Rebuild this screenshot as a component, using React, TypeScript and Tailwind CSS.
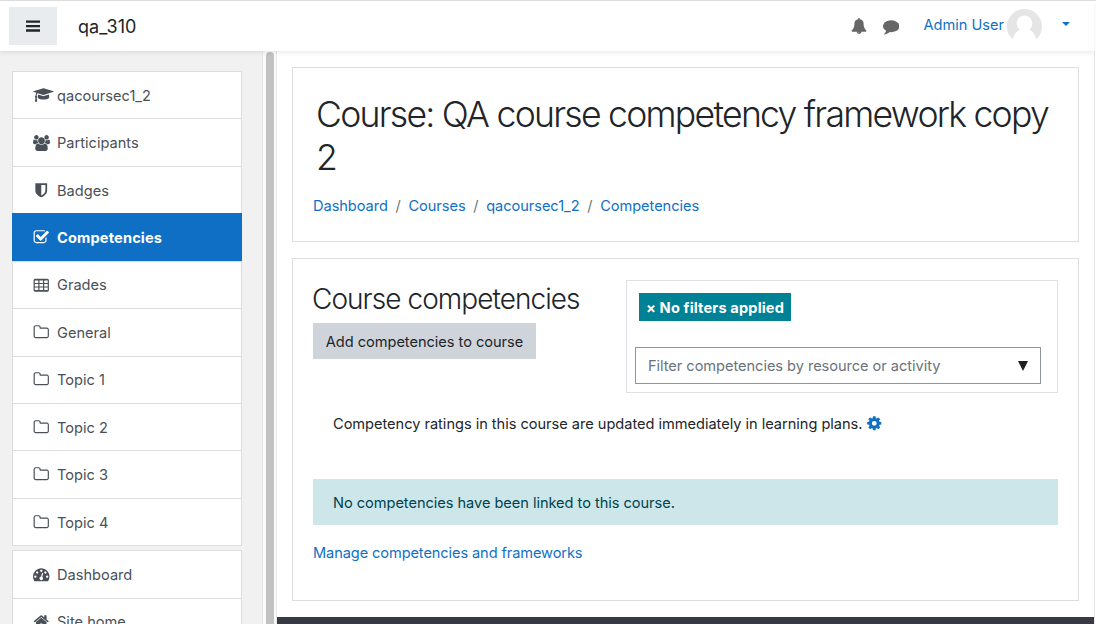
import type { ReactNode } from 'react';
import clsx from 'clsx';

const ICONS = {
    cap: 'M1774 836l18 316q4 69-82 128t-235 93.5-323 34.5-323-34.5-235-93.5-82-128l18-316 574 181q22 7 48 7t48-7zm530-324q0 23-22 31l-1120 352q-4 1-10 1t-10-1l-652-206q-43 34-71 111.5t-34 178.5q63 36 63 109 0 69-58 107l58 433q2 14-8 25-9 11-24 11h-192q-15 0-24-11-10-11-8-25l58-433q-58-38-58-107 0-73 65-111 11-207 98-330l-333-104q-22-8-22-31t22-31l1120-352q4-1 10-1t10 1l1120 352q22 8 22 31z',
    users: 'M529 896q-162 5-265 128h-134q-82 0-138-40.5t-56-118.5q0-353 124-353 6 0 43.5 21t97.5 42.5 119 21.5q67 0 133-23-5 37-5 66 0 139 81 256zm1071 637q0 120-73 189.5t-194 69.5h-874q-121 0-194-69.5t-73-189.5q0-53 3.5-103.5t14-109 26.5-108.5 43-97.5 62-81 85.5-53.5 111.5-20q10 0 43 21.5t73 48 107 48 135 21.5 135-21.5 107-48 73-48 43-21.5q61 0 111.5 20t85.5 53.5 62 81 43 97.5 26.5 108.5 14 109 3.5 103.5zm-1024-1277q0 106-75 181t-181 75-181-75-75-181 75-181 181-75 181 75 75 181zm704 384q0 159-112.5 271.5t-271.5 112.5-271.5-112.5-112.5-271.5 112.5-271.5 271.5-112.5 271.5 112.5 112.5 271.5zm576 225q0 78-56 118.5t-138 40.5h-134q-103-123-265-128 81-117 81-256 0-29-5-66 66 23 133 23 59 0 119-21.5t97.5-42.5 43.5-21q124 0 124 353zm-128-609q0 106-75 181t-181 75-181-75-75-181 75-181 181-75 181 75 75 181z',
    shield: 'M1344 960v-640h-448v1137q119-63 213-137 235-184 235-360zm192-768v768q0 86-33.5 170.5t-83 150-118 127.5-126.5 103-121 77.5-89.5 49.5-42.5 20q-12 6-26 6t-26-6q-16-7-42.5-20t-89.5-49.5-121-77.5-126.5-103-118-127.5-83-150-33.5-170.5v-768q0-26 19-45t45-19h1152q26 0 45 19t19 45z',
    check: 'M1472 930v318q0 119-84.5 203.5t-203.5 84.5h-832q-119 0-203.5-84.5t-84.5-203.5v-832q0-119 84.5-203.5t203.5-84.5h832q63 0 117 25 15 7 18 23 3 17-9 29l-49 49q-10 10-23 10-3 0-9-2-23-6-45-6h-832q-66 0-113 47t-47 113v832q0 66 47 113t113 47h832q66 0 113-47t47-113v-254q0-13 9-22l64-64q10-10 23-10 6 0 12 3 20 8 20 29zm231-489l-814 814q-24 24-57 24t-57-24l-430-430q-24-24-24-57t24-57l110-110q24-24 57-24t57 24l263 263 647-647q24-24 57-24t57 24l110 110q24 24 24 57t-24 57z',
    table: 'M1728 352v1088q0 66-47 113t-113 47h-1344q-66 0-113-47t-47-113v-1088q0-66 47-113t113-47h1344q66 0 113 47t47 113zM192 384v256h384v-256zM704 384v256h384v-256zM1216 384v256h384v-256zM192 768v256h384v-256zM704 768v256h384v-256zM1216 768v256h384v-256zM192 1152v256h384v-256zM704 1152v256h384v-256zM1216 1152v256h384v-256z',
    folder: 'M1600 1312v-704q0-40-28-68t-68-28h-704q-40 0-68-28t-28-68v-64q0-40-28-68t-68-28h-320q-40 0-68 28t-28 68v960q0 40 28 68t68 28h1216q40 0 68-28t28-68zm128-704v704q0 92-66 158t-158 66h-1216q-92 0-158-66t-66-158v-960q0-92 66-158t158-66h320q92 0 158 66t66 158v32h672q92 0 158 66t66 158z',
    gauge: 'M384 1152q0-53-37.5-90.5t-90.5-37.5-90.5 37.5-37.5 90.5 37.5 90.5 90.5 37.5 90.5-37.5 37.5-90.5zm192-448q0-53-37.5-90.5t-90.5-37.5-90.5 37.5-37.5 90.5 37.5 90.5 90.5 37.5 90.5-37.5 37.5-90.5zm428 481l101-382q6-26-7.5-48.5t-38.5-29.5-48 6.5-30 39.5l-101 382q-60 5-107 43.5t-63 98.5q-20 77 20 146t117 89 146-20 89-117q16-60-6-117t-72-91zm660-33q0-53-37.5-90.5t-90.5-37.5-90.5 37.5-37.5 90.5 37.5 90.5 90.5 37.5 90.5-37.5 37.5-90.5zm-640-640q0-53-37.5-90.5t-90.5-37.5-90.5 37.5-37.5 90.5 37.5 90.5 90.5 37.5 90.5-37.5 37.5-90.5zm448 192q0-53-37.5-90.5t-90.5-37.5-90.5 37.5-37.5 90.5 37.5 90.5 90.5 37.5 90.5-37.5 37.5-90.5zm320 448q0 261-141 483-19 29-54 29h-1402q-35 0-54-29-141-221-141-483 0-182 71-348t191-286 286-191 348-71 348 71 286 191 191 286 71 348z',
    home: 'M1472 992v480q0 26-19 45t-45 19h-384v-384h-256v384h-384q-26 0-45-19t-19-45v-480q0-1 .5-3t.5-3l575-474 575 474q1 2 1 6zm223-69l-62 74q-8 9-21 11h-3q-13 0-21-7l-692-577-692 577q-12 8-24 7-13-2-21-11l-62-74q-8-10-7-23.5t11-21.5l719-599q32-26 76-26t76 26l244 204v-195q0-14 9-23t23-9h192q14 0 23 9t9 23v408l219 182q10 8 11 21.5t-7 23.5z',
    cog: 'M1152 896q0-106-75-181t-181-75-181 75-75 181 75 181 181 75 181-75 75-181zm512-109v222q0 12-8 23t-20 13l-185 28q-19 54-39 91 35 50 107 138 10 12 10 25t-9 23q-27 37-99 108t-94 71q-12 0-26-9l-138-108q-44 23-91 38-16 136-29 186-7 28-36 28h-222q-14 0-24.5-8.5t-11.5-21.5l-28-184q-49-16-90-37l-141 107q-10 9-25 9-14 0-25-11-126-114-165-168-7-10-7-23 0-12 8-23 15-21 51-66.5t54-70.5q-27-50-41-99l-183-27q-13-2-21-12.5t-8-23.5v-222q0-12 8-23t19-13l186-28q14-46 39-92-40-57-107-138-10-12-10-24 0-10 9-23 26-36 98.5-107.5t94.5-71.5q13 0 26 10l138 107q44-23 91-38 16-136 29-186 7-28 36-28h222q14 0 24.5 8.5t11.5 21.5l28 184q49 16 90 37l142-107q9-9 24-9 13 0 25 10 129 119 165 170 7 8 7 22 0 12-8 23-15 21-51 66.5t-54 70.5q26 50 41 98l183 28q13 2 21 12.5t8 23.5z',
    bell: 'M912 1696q0-16-16-16-59 0-101.5-42.5t-42.5-101.5q0-16-16-16t-16 16q0 73 51.5 124.5t124.5 51.5q16 0 16-16zm816-288q0 52-38 90t-90 38h-448q0 106-75 181t-181 75-181-75-75-181h-448q-52 0-90-38t-38-90q50-42 91-88t85-119.5 74.5-158.5 50-206 19.5-260q0-152 117-282.5t307-158.5q-8-19-8-39 0-40 28-68t68-28 68 28 28 68q0 20-8 39 190 28 307 158.5t117 282.5q0 139 19.5 260t50 206 74.5 158.5 85 119.5 91 88z',
    comment: 'M1792 896q0 174-120 321.5t-326 233-450 85.5q-70 0-145-8-198 175-460 242-49 14-114 22-17 2-30.5-9t-17.5-29v-1q-3-4-.5-12t2-10 4.5-9.5l6-9 7-8.5 8-9q7-8 31-34.5t34.5-38 31-39.5 32.5-51 27-59 26-76q-157-89-247.5-220t-90.5-281q0-130 71-248.5t191-204.5 286-136.5 348-50.5q244 0 450 85.5t326 233 120 321.5z',
};

type IconName = keyof typeof ICONS;

const VIEW_BOXES: Partial<Record<IconName, string>> = {
    cap: '0 0 2304 1792',
    users: '-64 0 1920 1792',
};

function Icon({ name, className }: { name: IconName; className: string }) {
    return (
        <svg viewBox={VIEW_BOXES[name] ?? '0 0 1792 1792'} fill="currentColor" fillRule="evenodd" className={clsx('block shrink-0', className)}>
            <path d={ICONS[name]} />
        </svg>
    );
}

const courseNav: { label: string; icon: IconName; active?: boolean }[] = [
    { label: 'qacoursec1_2', icon: 'cap' },
    { label: 'Participants', icon: 'users' },
    { label: 'Badges', icon: 'shield' },
    { label: 'Competencies', icon: 'check', active: true },
    { label: 'Grades', icon: 'table' },
    { label: 'General', icon: 'folder' },
    { label: 'Topic 1', icon: 'folder' },
    { label: 'Topic 2', icon: 'folder' },
    { label: 'Topic 3', icon: 'folder' },
    { label: 'Topic 4', icon: 'folder' },
];

const siteNav: { label: string; icon: IconName; active?: boolean }[] = [
    { label: 'Dashboard', icon: 'gauge' },
    { label: 'Site home', icon: 'home' },
];

function NavList({ items }: { items: typeof courseNav }) {
    return (
        <ul className="border-b border-[#dcdddd]">
            {items.map(({ label, icon, active }) => (
                <li
                    key={label}
                    className={clsx(
                        'flex h-[47.43px] items-center border-x border-t pl-5 pt-px',
                        active ? 'border-[#0f6fc5] bg-[#0f6fc5] font-bold tracking-[0.15px] text-white' : 'border-[#dcdddd] bg-white text-[#495057]'
                    )}
                >
                    <span className="flex w-6 items-center pb-px">
                        <Icon name={icon} className={icon === 'cap' ? 'h-4 w-[21px]' : icon === 'users' ? 'h-4 w-[17px]' : 'size-[16.5px]'} />
                    </span>
                    <span>{label}</span>
                </li>
            ))}
        </ul>
    );
}

function Crumb({ children, first }: { children: ReactNode; first?: boolean }) {
    return (
        <li className="flex">
            {!first && <span className="px-[7.7px] text-[#6c757d]">/</span>}
            <a className="tracking-[-0.05px] text-[#1170c5]">{children}</a>
        </li>
    );
}

export default function App() {
    return (
        <div className="flex h-[624px] w-[1096px] flex-col overflow-hidden border-t border-[#dcdcdc] bg-white font-['Inter','Liberation_Sans',sans-serif] text-[14.6px] leading-[22px] text-[#212529]">
            <header className="z-10 flex h-[50px] w-[1094px] shrink-0 items-center bg-white pl-[9px] shadow-[0_2px_4px_rgba(0,0,0,0.08)]">
                <button className="flex h-[38px] w-12 items-center justify-center bg-[#e9ecef]">
                    <svg viewBox="0 0 14 12" fill="#212529" className="h-3 w-3.5">
                        <path d="M0 .5h14v2.300H0zM0 4.900h14v2.300H0zM0 9.300h14v2.500H0z" />
                    </svg>
                </button>
                <span className="ml-[21px] pt-0.5 text-[18px]">qa_310</span>
                <div className="ml-auto flex items-center text-[#666]">
                    <Icon name="bell" className="size-4" />
                    <Icon name="comment" className="ml-4 mt-px size-[16.5px]" />
                    <span className="ml-6 pb-0.5 text-[#1170c5]">Admin User</span>
                    <svg viewBox="0 0 35 35" className="ml-[3px] size-[35px]">
                        <circle cx="17.5" cy="17.5" r="17.5" fill="#e5e5e5" />
                        <path d="M17.5 6.5a8 8 0 0 1 4.8 14.2c3.700 1.600 6 5.200 7 9.800a17.500 17.500 0 0 1-23.600 0c1-4.600 3.300-8.200 7-9.800a8 8 0 0 1 4.800-14.200z" fill="#fff" />
                        <path d="M5.500 31h24v4h-24z" fill="#fff" />
                    </svg>
                    <svg viewBox="0 0 8 4" fill="#1170c5" className="mb-1 ml-5 mr-6 h-1 w-2">
                        <path d="M0 0h8L4 4z" />
                    </svg>
                </div>
            </header>
            <div className="flex min-h-0 flex-1">
                <aside className="flex w-[263px] shrink-0 flex-col gap-[3.9px] overflow-hidden border-r border-[#e6e6e6] bg-[#f1f1f1] pl-3 pr-5 pt-5">
                    <NavList items={courseNav} />
                    <NavList items={siteNav} />
                </aside>
                <div className="flex w-3.5 shrink-0 justify-center border-r border-[#e8e8e8] bg-[#fafafa] pt-px">
                    <div className="h-[600px] w-2 rounded-full bg-[#c1c1c1]" />
                </div>
                <main className="flex w-[818px] flex-col border-r border-[#e6e6e6]">
                    <section className="ml-[15px] mt-4 h-[175px] w-[787px] shrink-0 border border-[#dcdddd] pl-5 pt-[25px]">
                        <h1 className="ml-[3px] w-[745px] text-[35.6px] font-light leading-[43px] tracking-[-1.74px]">Course: QA course competency framework copy 2</h1>
                        <ol className="mt-4 flex">
                            <Crumb first>Dashboard</Crumb>
                            <Crumb>Courses</Crumb>
                            <Crumb>qacoursec1_2</Crumb>
                            <Crumb>Competencies</Crumb>
                        </ol>
                    </section>
                    <section className="ml-[15px] mt-4 flex h-[343px] w-[787px] shrink-0 flex-col border border-[#dcdddd] px-5 pt-[21px]">
                        <div className="flex justify-between">
                            <div>
                                <h2 className="-ml-px mt-0.5 text-[28px] font-light leading-[34px] tracking-[-0.95px]">Course competencies</h2>
                                <button className="mt-[7px] h-9 w-[223px] bg-[#ced4da] pt-0.5 tracking-[-0.03px]">Add competencies to course</button>
                            </div>
                            <div className="h-[113px] w-[432px] border border-[#dee2e6] pl-2 pt-3">
                                <span className="ml-1 flex h-7 w-[152px] items-center justify-center whitespace-nowrap bg-[#008196] pt-0.5 font-bold tracking-[0.15px] text-white">× No filters applied</span>
                                <div className="mt-[26px] flex h-[37px] w-[406px] items-center justify-between border border-[#8f959e] pl-3 pr-3">
                                    <span className="tracking-[-0.04px] text-[#6a737b]">Filter competencies by resource or activity</span>
                                    <svg viewBox="0 0 10 10" fill="#1d2125" className="size-2.5">
                                        <path d="M0 0h10L5 10z" />
                                    </svg>
                                </div>
                            </div>
                        </div>
                        <p className="ml-5 mt-5 flex items-center tracking-[-0.025px]">
                            Competency ratings in this course are updated immediately in learning plans.
                            <Icon name="cog" className="mb-0.5 ml-1 size-[16.5px] text-[#1170c5]" />
                        </p>
                        <div className="mt-11 flex h-[46px] items-center bg-[#cce6ea] px-5 pt-0.5 tracking-[-0.04px] text-[#00434e]">No competencies have been linked to this course.</div>
                        <a className="mt-[17px] tracking-[-0.1px] text-[#1170c5]">Manage competencies and frameworks</a>
                    </section>
                    <footer className="mt-4 h-5 shrink-0 bg-[#373a43]" />
                </main>
            </div>
        </div>
    );
}
